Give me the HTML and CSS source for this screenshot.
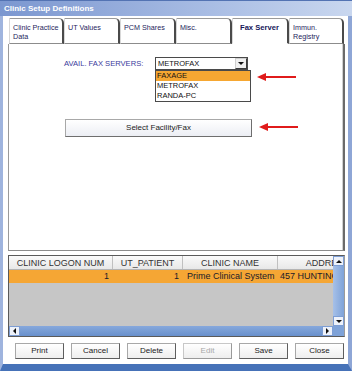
FILE: index.html
```html
<!DOCTYPE html>
<html lang="en">
<head>
  <meta charset="UTF-8" />
  <title>Clinic Setup Definitions</title>
  <link rel="stylesheet" href="styles.css">
</head>
<body>

  <div class="window">
    <div class="titlebar">Clinic Setup Definitions</div>

    <div class="dialog">
      <!-- Tabs -->
      <div class="tabs">
        <div class="tab">Clinic Practice<br>Data</div>
        <div class="tab">UT Values</div>
        <div class="tab">PCM Shares</div>
        <div class="tab">Misc.</div>
        <div class="tab active">Fax Server</div>
        <div class="tab">Immun.<br>Registry</div>
      </div>

      <!-- Fax Server pane -->
      <div class="pane">
        <div class="fax-row">
          <div class="fax-label">AVAIL. FAX SERVERS:</div>
          <div class="combo">
            <div class="combo-box">
              <span class="combo-text">METROFAX</span>
              <span class="combo-btn"><span class="tri-down"></span></span>
            </div>
            <div class="combo-list">
              <div class="combo-item picked">FAXAGE</div>
              <div class="combo-item">METROFAX</div>
              <div class="combo-item">RANDA-PC</div>
            </div>
          </div>
        </div>

        <div class="wide-btn">Select Facility/Fax</div>

        <svg class="arrow arrow-list" width="40" height="10" viewBox="0 0 40 10">
          <line x1="7" y1="5" x2="39" y2="5" stroke="#e01b1b" stroke-width="2"/>
          <polygon points="0,5 9,1 9,9" fill="#e01b1b"/>
        </svg>
        <svg class="arrow arrow-btn" width="40" height="10" viewBox="0 0 40 10">
          <line x1="7" y1="5" x2="39" y2="5" stroke="#e01b1b" stroke-width="2"/>
          <polygon points="0,5 9,1 9,9" fill="#e01b1b"/>
        </svg>
      </div>

      <!-- Grid -->
      <div class="grid">
        <div class="grid-main">
          <div class="grid-cols">
            <div class="grid-row grid-head">
              <div class="cell c1">CLINIC LOGON NUM</div>
              <div class="cell c2">UT_PATIENT</div>
              <div class="cell c3">CLINIC NAME</div>
              <div class="cell c4">ADDRESS</div>
            </div>
            <div class="grid-row grid-sel">
              <div class="cell c1 num">1</div>
              <div class="cell c2 num">1</div>
              <div class="cell c3">Prime Clinical System</div>
              <div class="cell c4 left">457 HUNTINGTON DR</div>
            </div>
            <div class="grid-empty"></div>
          </div>
          <div class="vscroll">
            <div class="sb-btn"><span class="tri-up"></span></div>
            <div class="sb-track"></div>
            <div class="sb-btn"><span class="tri-down"></span></div>
          </div>
        </div>
        <div class="hscroll">
          <div class="sb-btn"><span class="tri-left"></span></div>
          <div class="sb-track"></div>
          <div class="sb-btn"><span class="tri-right"></span></div>
          <div class="sb-corner"></div>
        </div>
      </div>

      <!-- Buttons -->
      <div class="actions">
        <div class="btn">Print</div>
        <div class="btn">Cancel</div>
        <div class="btn">Delete</div>
        <div class="btn disabled">Edit</div>
        <div class="btn">Save</div>
        <div class="btn">Close</div>
      </div>
    </div>
  </div>

</body>
</html>
```

FILE: styles.css
```css
body {
  margin: 0;
  background: #ffffff;
  font-family: 'Liberation Sans', Arial, sans-serif;
  font-size: 8px;
  overflow: hidden;
}

.window {
  width: 352px;
  height: 371px;
  display: flex;
  flex-direction: column;
}

.titlebar {
  height: 15px;
  line-height: 15px;
  border-top: 1px solid #5373b3;
  padding-left: 4px;
  background: linear-gradient(to right, #7b97d0, #a9bde4 60%, #c9d7ef);
  color: #ffffff;
  font-weight: bold;
  font-size: 8px;
}

.dialog {
  flex: 1;
  display: flex;
  flex-direction: column;
  background: #ffffff;
  border-left: 3px solid #9fb4de;
  border-right: 4px solid #8ea6d6;
  border-bottom: 7px solid #4672b8;
  padding: 2px 3px 5px 5px;
}

/* tabs */
.tabs {
  display: flex;
  height: 26px;
  padding-left: 1px;
}

.tab {
  box-sizing: border-box;
  width: 56px;
  padding: 4px 0 0 3px;
  line-height: 9px;
  font-size: 7.2px;
  white-space: nowrap;
  color: #1e1e5c;
  border-top: 1px solid #9a9a9a;
  border-left: 1px solid #d8d8d8;
  border-right: 2px solid #4a4a4a;
  border-top-right-radius: 5px;
  border-bottom: 1px solid #8c8c8c;
}

.tab:first-child { width: 55px; }
.tab:last-child { width: 55px; }

.tab.active {
  width: 57px;
  padding-left: 7px;
  font-size: 7.6px;
  font-weight: bold;
  color: #16165a;
  border-bottom-color: #ffffff;
}

/* pane */
.pane {
  position: relative;
  height: 207px;
  box-sizing: border-box;
  border-left: 1px solid #9a9a9a;
  border-right: 2px solid #6a6a6a;
  border-bottom: 1px solid #8c8c8c;
  box-shadow: inset -1px 0 0 #d0d0d0;
}

.fax-row {
  display: flex;
  align-items: flex-start;
  margin-top: 13px;
  padding-left: 55px;
}

.fax-label {
  width: 91px;
  padding-top: 2px;
  color: #3a3a9c;
  font-size: 7.6px;
}

.combo {
  display: flex;
  flex-direction: column;
  width: 96px;
}

.combo-box {
  display: flex;
  align-items: center;
  width: 93px;
  height: 13px;
  box-sizing: border-box;
  border: 1px solid #4a4a4a;
  background: #ffffff;
}

.combo-text {
  flex: 1;
  padding-left: 2px;
  font-size: 7.5px;
  color: #111111;
}

.combo-btn {
  display: flex;
  align-items: center;
  justify-content: center;
  width: 12px;
  height: 11px;
  box-sizing: border-box;
  border: 1px solid #3a3a3a;
  border-top-color: #cfcfcf;
  border-left-color: #cfcfcf;
  background: #f0f0f0;
}

.combo-list {
  width: 96px;
  box-sizing: border-box;
  border: 1px solid #4a4a4a;
  background: #ffffff;
}

.combo-item {
  height: 10px;
  line-height: 10px;
  padding-left: 1px;
  font-size: 7.5px;
  color: #111111;
}

.combo-item.picked {
  background: #f6a732;
}

.wide-btn {
  width: 187px;
  height: 18px;
  line-height: 16px;
  margin: 17px 0 0 56px;
  box-sizing: border-box;
  text-align: center;
  color: #222222;
  border: 1px solid #a8a8a8;
  border-right-color: #6e6e6e;
  border-bottom-color: #6e6e6e;
  background: linear-gradient(#ffffff, #eceef4);
}

.arrow {
  position: absolute;
}

.arrow-list { left: 248px; top: 28px; }
.arrow-btn { left: 250px; top: 78px; }

/* grid */
.grid {
  margin-top: 4px;
  height: 82px;
  box-sizing: border-box;
  border: 1px solid #5a5a5a;
  border-right-color: #9a9a9a;
  display: flex;
  flex-direction: column;
}

.grid-main {
  flex: 1;
  display: flex;
  min-height: 0;
}

.grid-cols {
  flex: 1;
  display: flex;
  flex-direction: column;
  overflow: hidden;
}

.grid-row {
  display: flex;
  white-space: nowrap;
}

.cell {
  flex: none;
  box-sizing: border-box;
  overflow: hidden;
  font-size: 9px;
}

.c1 { width: 104px; }
.c2 { width: 70px; }
.c3 { width: 95px; }
.c4 { width: 100px; }

.grid-head {
  height: 14px;
  line-height: 14px;
  background: linear-gradient(#fafafa, #e8e8e8);
  border-bottom: 1px solid #b4b4b4;
  box-sizing: border-box;
}

.grid-head .cell {
  text-align: center;
  color: #333333;
  border-right: 1px solid #c0c0c0;
}

.grid-sel {
  height: 13px;
  line-height: 13px;
  background: #f5a634;
  color: #1a1a2a;
}

.grid-sel .num {
  text-align: right;
  padding-right: 4px;
}

.grid-sel .c3 {
  padding-left: 4px;
}

.grid-sel .left {
  padding-left: 2px;
}

.grid-empty {
  flex: 1;
  background: #c6c6c6;
}

.vscroll {
  width: 11px;
  display: flex;
  flex-direction: column;
  background: #7ea2d8;
}

.hscroll {
  height: 10px;
  display: flex;
  background: #6f96d0;
}

.sb-track {
  flex: 1;
  background: linear-gradient(#86a8dc, #6890cc);
}

.vscroll .sb-track {
  background: linear-gradient(to right, #a6c0e8, #7ea2d8);
}

.sb-btn {
  width: 11px;
  height: 10px;
  box-sizing: border-box;
  display: flex;
  align-items: center;
  justify-content: center;
  background: #eef2fa;
  border: 1px solid #7e9ed4;
}

.sb-corner {
  width: 11px;
  background: #7ea2d8;
}

.tri-down, .tri-up, .tri-left, .tri-right {
  width: 0;
  height: 0;
  border: 3px solid transparent;
}

.tri-down { border-top: 3px solid #111111; border-bottom: 0; }
.tri-up { border-bottom: 3px solid #111111; border-top: 0; }
.tri-left { border-right: 3px solid #111111; border-left: 0; }
.tri-right { border-left: 3px solid #111111; border-right: 0; }

/* bottom buttons */
.actions {
  display: flex;
  gap: 7px;
  margin-top: 6px;
  padding-left: 7px;
}

.btn {
  width: 49px;
  height: 16px;
  line-height: 14px;
  box-sizing: border-box;
  text-align: center;
  color: #222222;
  border: 1px solid #a8a8a8;
  border-right-color: #5e5e5e;
  border-bottom-color: #5e5e5e;
  background: linear-gradient(#ffffff, #eeeeee);
}

.btn.disabled {
  color: #a8a8a8;
  border-color: #c8c8c8;
  border-right-color: #9a9a9a;
  border-bottom-color: #9a9a9a;
}
```
